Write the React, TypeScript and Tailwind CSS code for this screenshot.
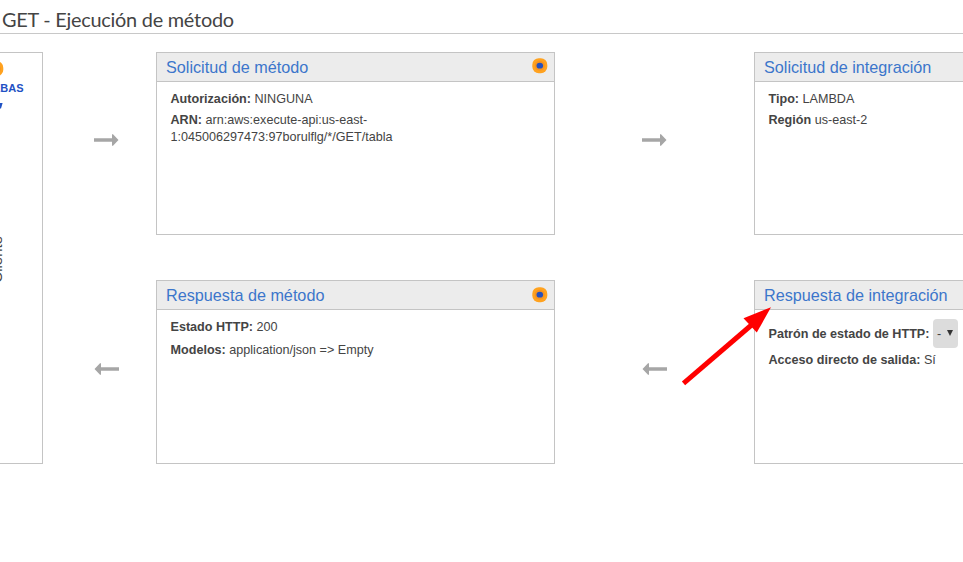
import type { ReactNode } from "react";

function TestIcon() {
  return (
    <svg className="block h-4 w-4 shrink-0" viewBox="0 0 16 16">
      <rect x="0.3" y="0.2" width="15" height="15" rx="6.5" fill="#ffa21f" />
      <circle cx="7.8" cy="7.7" r="5" fill="#f59421" />
      <ellipse cx="7.8" cy="7.7" rx="3.3" ry="2.9" fill="#2450bd" />
    </svg>
  );
}

function FlowArrow({ left = false }: { left?: boolean }) {
  return (
    <svg className={left ? "block h-3 w-[25px] rotate-180" : "block h-3 w-[25px]"} viewBox="0 0 25 12">
      <path d="M0 4.2H18V0.2H19L24.5 6L19 11.8H18V7.8H0Z" fill="#a6a6a6" />
    </svg>
  );
}

function Panel({ title, icon, className = "", children }: { title: string; icon?: ReactNode; className?: string; children: ReactNode }) {
  return (
    <section className={`flex flex-col border border-[#c4c4c4] bg-white ${className}`}>
      <header className="flex h-[29px] shrink-0 items-center justify-between border-b border-[#c4c4c4] bg-[#ececec] pr-1.5 pl-[9px]">
        <h2 className="text-[16.2px] leading-5 whitespace-nowrap text-[#3c76cb]">{title}</h2>
        {icon}
      </header>
      <div className="pt-px pl-[13.5px] text-[12.6px] leading-[17px]">{children}</div>
    </section>
  );
}

export default function App() {
  return (
    <main className="relative h-[562px] w-[963px] overflow-hidden bg-white font-['Liberation_Sans',Arial,sans-serif] text-[#444]">
      <h1 className="h-[34px] border-b border-[#c8c8c8] pt-[6px] pl-[2px] text-[19.9px] leading-[26px] tracking-[-0.25px] [font-family:Lato,sans-serif]">
        GET - Ejecución de método
      </h1>
      <div className="mt-[18px] flex h-[412px]">
        <aside className="flex w-[43px] shrink-0 flex-col items-end overflow-hidden border-y border-r border-[#c4c4c4]">
          <div className="mt-[8px] mr-[38px]"><TestIcon /></div>
          <div className="mt-[2px] mr-[18.5px] text-right text-[11px] leading-[18px] font-bold text-[#1f51c4]">
            PRUEBAS
          </div>
          <svg className="mt-[6px] mr-[39px] block h-[6px] w-[6px]" viewBox="0 0 6 6">
            <path d="M3 0H5.6L4 5.5H2.5Z" fill="#1f51c4" />
          </svg>
          <div className="mt-[127px] mr-[36px] rotate-180 text-[15px] leading-[18px] [writing-mode:vertical-rl]">Cliente</div>
        </aside>
        <div className="flex w-[113px] shrink-0 flex-col pt-[82px] pl-[51px]">
          <FlowArrow />
          <div className="mt-[217px]"><FlowArrow left /></div>
        </div>
        <div className="flex w-[399px] shrink-0 flex-col justify-between">
          <Panel title="Solicitud de método" icon={<div className="-mt-[3px]"><TestIcon /></div>} className="h-[183px]">
            <p className="mt-2"><b>Autorización:</b> NINGUNA</p>
            <p className="mt-1"><b>ARN:</b> arn:aws:execute-api:us-east-<br />1:045006297473:97borulflg/*/GET/tabla</p>
          </Panel>
          <Panel title="Respuesta de método" icon={<div className="-mt-px"><TestIcon /></div>} className="h-[184px]">
            <p className="mt-2"><b>Estado HTTP:</b> 200</p>
            <p className="mt-1.5"><b>Modelos:</b> application/json =&gt; Empty</p>
          </Panel>
        </div>
        <div className="flex w-[199px] shrink-0 flex-col pt-[82px] pl-[87px]">
          <FlowArrow />
          <div className="mt-[217px]"><FlowArrow left /></div>
        </div>
        <div className="flex w-[209px] shrink-0 flex-col justify-between">
          <Panel title="Solicitud de integración" className="h-[183px] border-r-0">
            <p className="mt-2"><b>Tipo:</b> LAMBDA</p>
            <p className="mt-1"><b>Región</b> us-east-2</p>
          </Panel>
          <Panel title="Respuesta de integración" className="h-[184px] border-r-0">
            <div className="mt-2 flex items-center gap-[4px] whitespace-nowrap">
              <b className="pt-0.5">Patrón de estado de HTTP:</b>
              <button className="flex h-[29px] w-[25px] shrink-0 items-center justify-between rounded bg-[#dcdcdc] pt-px pr-[5px] pl-[3.5px]">
                <span>-</span>
                <svg className="-mt-[2px] h-[6px] w-[6px]" viewBox="0 0 6 6"><path d="M0 0H6L3 6Z" fill="#333" /></svg>
              </button>
            </div>
            <p className="mt-1"><b>Acceso directo de salida:</b> Sí</p>
          </Panel>
        </div>
      </div>
      <svg className="absolute top-[300px] left-[675px] h-[90px] w-[100px]" viewBox="675 300 100 90">
        <path d="M683.5 383.3L755 322" stroke="#f00" strokeWidth="5" />
        <path d="M771 307.3L743.5 318.2L756.8 332.6Z" fill="#f00" />
      </svg>
    </main>
  );
}
